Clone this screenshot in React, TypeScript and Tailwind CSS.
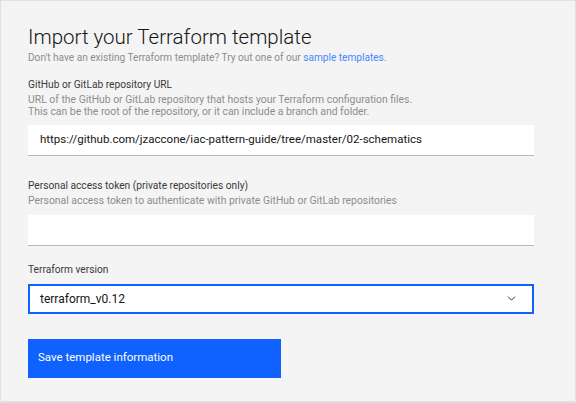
import { ChevronDown } from 'lucide-react';

const font = { fontFamily: 'Roboto, "Noto Sans", sans-serif' };

const Field = ({ label, helper, children }: { label: string; helper?: string[]; children: React.ReactNode }) => (
    <div>
        <div className="text-[10.2px] leading-[12px] text-[#393939]">{label}</div>
        {helper && (
            <div className="mt-[3px] text-[10.4px] leading-[11.5px] text-[#8d8d8d]">
                {helper.map((h) => (
                    <div key={h}>{h}</div>
                ))}
            </div>
        )}
        <div className="mt-[8px]">{children}</div>
    </div>
);

export default function App() {
    return (
        <div className="w-[576px] h-[403px] bg-[#f4f4f4] border border-b-2 border-[#e0e0e0] overflow-hidden" style={font}>
            <div className="pl-[27px] pr-[41px] pt-[22px]">
                {/* Header */}
                <h1 className="text-[20.5px] leading-[28px] font-light text-[#161616]">
                    Import your Terraform template
                </h1>
                <p className="mt-[1px] text-[10.1px] leading-[12px] text-[#8d8d8d]">
                    Don't have an existing Terraform template? Try out one of our{' '}
                    <span className="text-[#4589ff]">sample templates</span>.
                </p>

                <div className="mt-[15px]">
                    <Field
                        label="GitHub or GitLab repository URL"
                        helper={[
                            'URL of the GitHub or GitLab repository that hosts your Terraform configuration files.',
                            'This can be the root of the repository, or it can include a branch and folder.',
                        ]}
                    >
                        <div className="h-[31px] bg-white border-b border-[#b8b8b8] flex items-center px-[12px] text-[11.5px] text-[#161616]">
                            https://github.com/jzaccone/iac-pattern-guide/tree/master/02-schematics
                        </div>
                    </Field>
                </div>

                <div className="mt-[24px]">
                    <Field
                        label="Personal access token (private repositories only)"
                        helper={['Personal access token to authenticate with private GitHub or GitLab repositories']}
                    >
                        <div className="h-[31px] bg-white border-b border-[#b8b8b8]" />
                    </Field>
                </div>

                <div className="mt-[18px]">
                    <Field label="Terraform version">
                        <div className="h-[30px] bg-white border-2 border-[#0f62fe] flex items-center justify-between pl-[10px] pr-[14px] text-[12px] text-[#161616]">
                            <span>terraform_v0.12</span>
                            <ChevronDown size={13} strokeWidth={1.6} className="text-[#161616]" />
                        </div>
                    </Field>
                </div>

                <button className="mt-[25px] w-[253px] h-[39px] bg-[#0f62fe] text-white text-[11.5px] text-left pl-[10px]">
                    Save template information
                </button>
            </div>
        </div>
    );
}
